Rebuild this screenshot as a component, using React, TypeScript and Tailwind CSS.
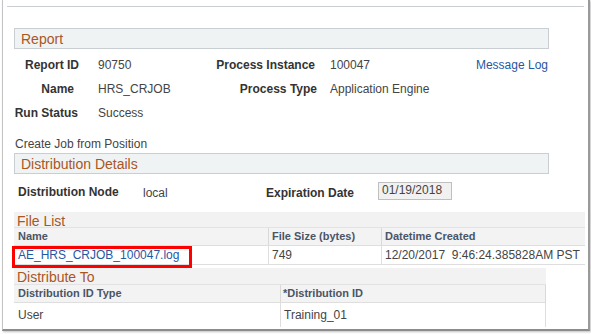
import React from "react";

const font = { fontFamily: '"Liberation Sans", Arial, sans-serif' };

const GroupHeader = ({ title }: { title: string }) => (
  <div className="ml-[11px] w-[535px] h-[21px] bg-[#f0f3f4] border border-[#c9ced2] flex items-center pl-[6px]">
    <span className="text-[14px] text-[#a9561f] leading-none">{title}</span>
  </div>
);

const App = () => {
  return (
    <div className="w-[591px] h-[334px] bg-white overflow-hidden" style={font}>
      <div className="relative ml-[2px] w-[588px] h-[331px] border-l border-r-2 border-b-2 border-l-[#c4c4c4] border-r-[#9a9a9a] border-b-[#8c8c8c] shadow-[1px_1px_2px_rgba(0,0,0,0.25)]">
        <div className="ml-[4px] pt-[6px]">
          <div className="w-[577px] h-px bg-[#c9cdd1]" />
        </div>

        <div className="mt-[21px]">
          <GroupHeader title="Report" />
        </div>

        <div className="mt-[4px] text-[12px] text-[#333]">
          <div className="h-[24px] flex items-center">
            <span className="w-[76px] text-right font-bold">Report ID</span>
            <span className="w-[121px] pl-[19px] text-[#444]">90750</span>
            <span className="w-[115px] text-right font-bold">Process Instance</span>
            <span className="w-[146px] pl-[15px] text-[#444]">100047</span>
            <span className="w-[87px] text-right text-[#1f58a3]">Message Log</span>
          </div>
          <div className="h-[24px] flex items-center">
            <span className="w-[71px] text-right font-bold">Name</span>
            <span className="w-[126px] pl-[24px] text-[#444]">HRS_CRJOB</span>
            <span className="w-[117px] text-right font-bold">Process Type</span>
            <span className="pl-[13px] text-[#444]">Application Engine</span>
          </div>
          <div className="h-[24px] flex items-center">
            <span className="w-[75px] text-right font-bold">Run Status</span>
            <span className="pl-[20px] text-[#444]">Success</span>
          </div>
        </div>

        <div className="mt-[11px] ml-[12px] h-[16px] leading-[16px] text-[12px] text-[#444]">
          Create Job from Position
        </div>

        <div className="mt-[1px]">
          <GroupHeader title="Distribution Details" />
        </div>

        <div className="h-[36px] flex items-center text-[12px] text-[#333]">
          <span className="ml-[15px] w-[125px] font-bold">Distribution Node</span>
          <span className="w-[123px] pt-[2px] text-[#444]">local</span>
          <span className="w-[112px] pt-[2px] font-bold">Expiration Date</span>
          <span className="w-[74px] h-[18px] mb-[3px] bg-[#f1f1f1] border border-[#bfbfbf] pl-[3px] leading-[15px] text-[#444]">
            01/19/2018
          </span>
        </div>

        <div className="relative mt-[2px] ml-[11px] w-[571px]">
          <div className="h-[15px] bg-[#f2f2f2] pl-[3px] flex items-center">
            <span className="text-[14px] leading-none text-[#a9561f] pt-[2px]">File List</span>
          </div>
          <div className="flex h-[18px] bg-[#f3f3f3] border-t border-[#e2e2e2] text-[11px] font-bold text-[#4a5566] items-center">
            <span className="w-[255px] pl-[4px] h-full flex items-center border-r border-[#d9d9d9]">Name</span>
            <span className="w-[113px] pl-[3px] h-full flex items-center border-r border-[#d9d9d9]">File Size (bytes)</span>
            <span className="pl-[3px]">Datetime Created</span>
          </div>
          <div className="flex h-[20px] border-t border-b border-[#dedede] text-[12px] text-[#444] items-center">
            <span className="w-[255px] pl-[4px] h-full flex items-center border-r border-[#dedede] text-[#1f58a3]">AE_HRS_CRJOB_100047.log</span>
            <span className="w-[113px] pl-[3px] h-full flex items-center border-r border-[#dedede]">749</span>
            <span className="pl-[3px] whitespace-pre">12/20/2017  9:46:24.385828AM PST</span>
          </div>
          <div className="absolute left-[-2px] top-[34px] w-[180px] h-[22px] border-[3px] border-[#ff0000]" />
        </div>

        <div className="ml-[11px] mt-[3px] w-[532px]">
          <div className="h-[16px] bg-[#f2f2f2] pl-[3px] flex items-center">
            <span className="text-[14px] leading-none text-[#a9561f] pt-[2px]">Distribute To</span>
          </div>
          <div className="flex h-[18px] bg-[#f3f3f3] border-t border-[#e2e2e2] text-[11px] font-bold text-[#4a5566] items-center">
            <span className="w-[267px] pl-[4px] h-full flex items-center border-r border-[#d9d9d9]">Distribution ID Type</span>
            <span className="pl-[2px] flex-1 h-full flex items-center border-r border-[#d9d9d9]">*Distribution ID</span>
          </div>
          <div className="flex h-[25px] border-t border-[#dedede] text-[12px] text-[#444] items-center">
            <span className="w-[267px] pl-[4px] h-full flex items-center border-r border-[#dedede]">User</span>
            <span className="pl-[3px] flex-1 h-full flex items-center border-r border-[#dedede]">Training_01</span>
          </div>
        </div>
      </div>
    </div>
  );
};

export default App;
